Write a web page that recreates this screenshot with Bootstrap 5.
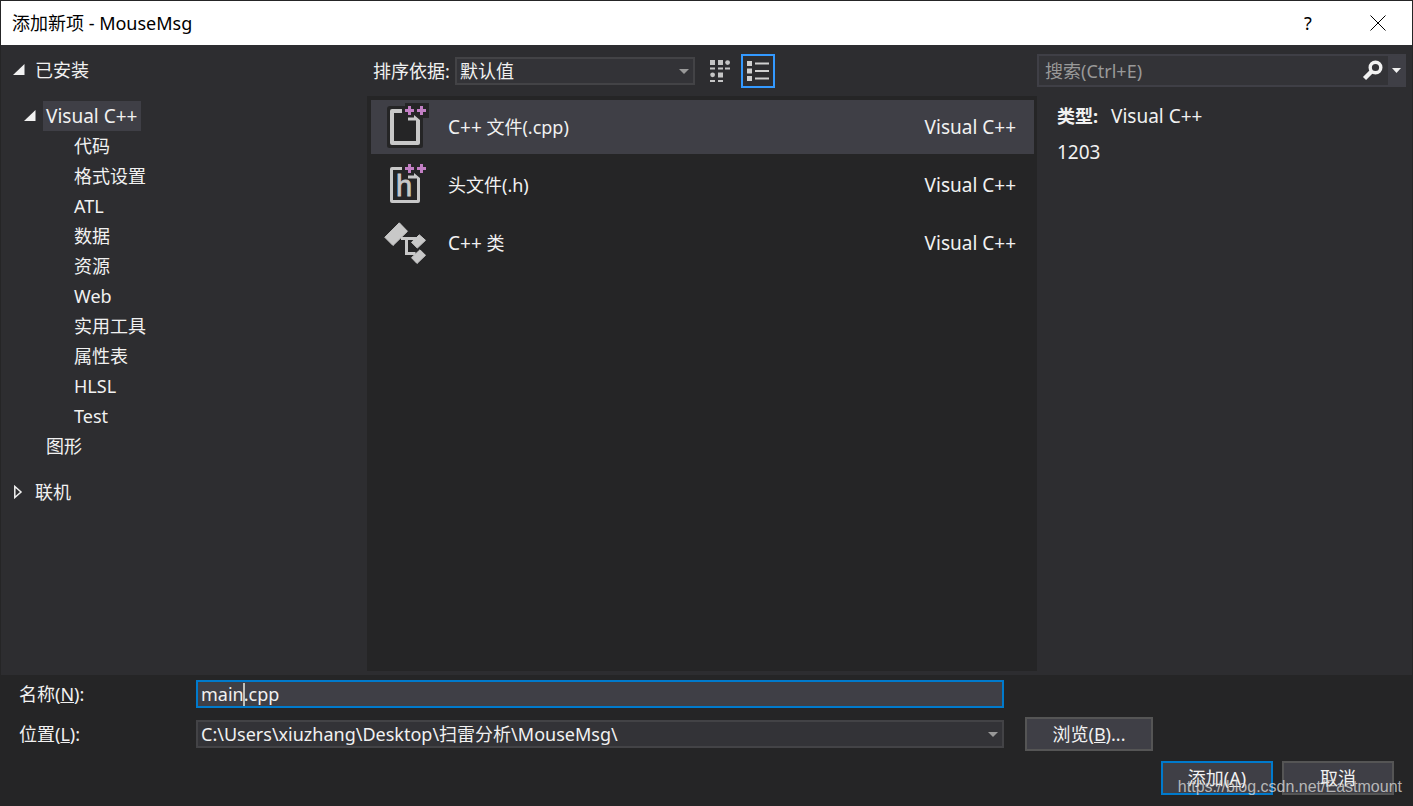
<!DOCTYPE html>
<html lang="zh-CN">
<head>
<meta charset="utf-8">
<meta name="viewport" content="width=device-width, initial-scale=1">
<title>添加新项 - MouseMsg</title>
<link href="https://cdn.jsdelivr.net/npm/bootstrap@5.3.0/dist/css/bootstrap.min.css" rel="stylesheet">
<style>
  body { font: 18px/30px "Noto Sans", "Noto Sans CJK SC", sans-serif; color: #f1f1f1; background: #252526; }
  button { font: inherit; color: inherit; background: none; border: 0; padding: 0; }
  svg { display: block; flex: none; }
  .lang { font-size: 19px; }
  .dialog { border: 1px solid #252526; }
  .titlebar { height: 44px; background: #fff; color: #000; padding: 0 10px 0 11px; line-height: 28px; }
  .title-btn { width: 48px; height: 44px; }
  .title-help { margin-right: 22px; }
  .workspace { display: grid; grid-template-columns: 366px minmax(0, 1fr) 375px; background: #2d2d30; }

  .tree { padding-top: 10px; }
  .tree ul { list-style: none; margin: 0; padding: 0; }
  .tree-node { display: flex; align-items: center; height: 30px; }
  .tree-node .twisty { width: 22px; flex: none; }
  .tree-root { padding-left: 12px; }
  .tree-branch { padding-left: 20px; }
  .tree-branch .twisty { padding-left: 3px; }
  .tree-label { padding: 0 3px; }
  .tree-root .tree-label { padding-left: 0; }
  .tree-leaf { padding-left: 70px; }
  .tree-node[aria-selected="true"] .tree-label { background: #3f3f46; padding-right: 4px; }

  .toolbar { height: 51px; padding-left: 6px; }
  .toolbar label { width: 82px; }
  .sort-box { width: 240px; }
  .view-btn { width: 34px; height: 34px; border: 2px solid transparent; display: flex; align-items: center; justify-content: center; }
  .view-btn[aria-pressed="true"] { border-color: #3399ff; }
  .templates { background: #252526; padding: 4px 3px 4px 4px; margin-bottom: 4px; }
  .template { height: 54px; padding: 0 18px 0 13px; text-align: left; }
  .template[aria-selected="true"] { background: #3f3f46; }

  .field { display: block; width: 100%; height: 28px; font: inherit; line-height: 24px; color: #f1f1f1; background: #333337; border: 2px solid #434346; border-radius: 0; padding: 0 3px; appearance: none; outline: 0; }
  .field-active { background: #3f3f46; border-color: #007acc; }
  .drop-arrow { position: absolute; right: 6px; top: 12px; pointer-events: none; }
  .text-caret { position: absolute; left: 47px; top: 3px; width: 2px; height: 23px; background: #c0c0b9; }

  .search { height: 33px; margin: 9px 6px 0 0; border: 2px solid #3f3f46; background: #333337; }
  .search input { font: inherit; color: #f1f1f1; background: none; border: 0; outline: 0; padding: 0 6px; line-height: 28px; }
  .search input::placeholder { color: #999; opacity: 1; }
  .search-menu { width: 16px; height: 29px; background: #3f3f46; }
  .details { padding: 14px 20px; }
  .details p { margin: 0 0 6px; }

  .footer { display: flex; flex-direction: column; gap: 9px; padding: 5px 18px 10px; line-height: 28px; }
  .form-line { display: grid; grid-template-columns: 177px minmax(0, 1fr) 390px; align-items: center; }
  .aside { padding-left: 21px; }
  .actions { gap: 9px; padding-top: 1px; }
  .dlg-btn { width: 112px; height: 34px; background: #3f3f46; border: 2px solid #555; }
  .dlg-btn-wide { width: 128px; display: block; }
  .dlg-btn-default { border-color: #007acc; }
  .watermark { position: absolute; right: 10px; bottom: 8px; font: 16px/20px "Liberation Sans", sans-serif; color: rgba(215, 215, 215, .8); pointer-events: none; }
</style>
</head>
<body>
<div class="dialog d-flex flex-column min-vh-100 position-relative">
  <header class="titlebar d-flex align-items-center">
    <span class="me-auto">添加新项 - MouseMsg</span>
    <button type="button" class="title-btn title-help" aria-label="帮助">?</button>
    <button type="button" class="title-btn d-flex align-items-center justify-content-center" aria-label="关闭">
      <svg width="16" height="16" viewBox="0 0 16 16" stroke="#000"><path d="M.5.5l15 15M15.5.5l-15 15"/></svg>
    </button>
  </header>

  <main class="workspace flex-grow-1">
    <nav class="tree">
      <ul class="d-flex flex-column gap-3">
        <li>
          <button type="button" class="tree-node tree-root" aria-expanded="true">
            <span class="twisty"><svg width="12" height="12"><path d="M11.500 0v11H0z" fill="#f1f1f1"/></svg></span><span class="tree-label">已安装</span>
          </button>
        </li>
        <li>
          <ul>
            <li>
              <button type="button" class="tree-node tree-branch" aria-expanded="true" aria-selected="true">
                <span class="twisty"><svg width="12" height="12"><path d="M11.500 0v11H0z" fill="#f1f1f1"/></svg></span><span class="tree-label lang">Visual C++</span>
              </button>
              <ul>
                <li><button type="button" class="tree-node tree-leaf"><span class="tree-label">代码</span></button></li>
                <li><button type="button" class="tree-node tree-leaf"><span class="tree-label">格式设置</span></button></li>
                <li><button type="button" class="tree-node tree-leaf"><span class="tree-label">ATL</span></button></li>
                <li><button type="button" class="tree-node tree-leaf"><span class="tree-label">数据</span></button></li>
                <li><button type="button" class="tree-node tree-leaf"><span class="tree-label">资源</span></button></li>
                <li><button type="button" class="tree-node tree-leaf"><span class="tree-label">Web</span></button></li>
                <li><button type="button" class="tree-node tree-leaf"><span class="tree-label">实用工具</span></button></li>
                <li><button type="button" class="tree-node tree-leaf"><span class="tree-label">属性表</span></button></li>
                <li><button type="button" class="tree-node tree-leaf"><span class="tree-label">HLSL</span></button></li>
                <li><button type="button" class="tree-node tree-leaf"><span class="tree-label">Test</span></button></li>
              </ul>
            </li>
            <li><button type="button" class="tree-node tree-branch"><span class="twisty"></span><span class="tree-label">图形</span></button></li>
          </ul>
        </li>
        <li>
          <button type="button" class="tree-node tree-root" aria-expanded="false">
            <span class="twisty"><svg width="10" height="14"><path d="M1.800 1.500v11L8 7z" fill="none" stroke="#f1f1f1" stroke-width="1.500"/></svg></span><span class="tree-label">联机</span>
          </button>
        </li>
      </ul>
    </nav>

    <section class="d-flex flex-column">
      <div class="toolbar d-flex align-items-center">
        <label for="sort">排序依据:</label>
        <div class="sort-box position-relative">
          <select id="sort" class="field"><option>默认值</option></select>
          <svg class="drop-arrow" width="10" height="5"><path d="M0 0h10L5 5z" fill="#999"/></svg>
        </div>
        <button type="button" class="view-btn ms-2" aria-label="中等图标" aria-pressed="false">
          <svg width="21" height="22" fill="#c5c5c5"><path d="M0 0h5v5H0zM8 0h5v5H8zM0 7.500h5v2H0zM8 7.500h5v2H8zM15 7.500h5v2h-5zM8 12.500h5v5H8zM0 20h5v2H0zM8 20h5v2H8z"/><circle cx="17.600" cy="2.600" r="2.400"/><circle cx="2.600" cy="14.800" r="2.400"/></svg>
        </button>
        <button type="button" class="view-btn ms-1" aria-label="小图标" aria-pressed="true">
          <svg width="22" height="20" fill="#d0d0d0"><path d="M0 0h5v5H0zM0 7.500h5v5H0zM0 15h5v5H0zM8 1.500h14v2H8zM8 9h14v2H8zM8 16.500h14v2H8z"/></svg>
        </button>
      </div>
      <div class="templates flex-grow-1 d-flex flex-column gap-1" role="listbox">
        <button type="button" class="template d-flex align-items-center" role="option" aria-selected="true">
          <svg class="me-3" width="48" height="50">
            <path d="M6 4h15v-3h24v15h-6v28q0 2-2 2H5.500q-2.500 0-2.500-2.500V7q0-3 3-3z" fill="#252526"/>
            <path d="M18 7v4h-8v28h22V18.500h-8v-3h6V13l6 5v23q0 2-2 2H8q-2 0-2-2V9q0-2 2-2z" fill="#c8c8c8"/>
            <path d="M24 4h3v3h3v3h-3v3h-3v-3h-3V7h3zM36 4h3v3h3v3h-3v3h-3v-3h-3V7h3z" fill="#c27fc4"/>
          </svg>
          <span class="me-auto"><span class="lang">C++</span> 文件(.cpp)</span><span class="lang">Visual C++</span>
        </button>
        <button type="button" class="template d-flex align-items-center" role="option" aria-selected="false">
          <svg class="me-3" width="48" height="50">
            <path d="M18 7v3H9v30h24V18.500h-9v-3h6V13l6 5v23q0 2-2 2H8q-2 0-2-2V9q0-2 2-2z" fill="#c8c8c8"/>
            <path d="M24 4h3v3h3v3h-3v3h-3v-3h-3V7h3zM36 4h3v3h3v3h-3v3h-3v-3h-3V7h3z" fill="#c27fc4"/>
            <text x="12" y="36" font-family="Liberation Sans, sans-serif" font-size="29" fill="#c8c8c8" stroke="#c8c8c8" stroke-width=".8">h</text>
          </svg>
          <span class="me-auto">头文件(.h)</span><span class="lang">Visual C++</span>
        </button>
        <button type="button" class="template d-flex align-items-center" role="option" aria-selected="false">
          <svg class="me-3" width="48" height="50" fill="#c8c8c8" stroke="#c8c8c8" stroke-linejoin="round">
            <path d="M.800 19.300L15.300 4.800l8.200 8.500L9 27.500zM35.300 16.800l6.200 5.500-8.200 7.800-5.800-5.800zM36 31.800l5.500 5.500-8.500 8.200-5.500-5.800z"/>
            <path d="M17 20.500h16M22.500 20v15.500h9" fill="none" stroke-width="3" stroke-linejoin="miter"/>
          </svg>
          <span class="me-auto"><span class="lang">C++</span> 类</span><span class="lang">Visual C++</span>
        </button>
      </div>
    </section>

    <aside>
      <div class="search d-flex align-items-center">
        <input class="flex-grow-1" type="search" placeholder="搜索(Ctrl+E)" aria-label="搜索">
        <button type="button" class="me-1" aria-label="开始搜索">
          <svg width="22" height="22" fill="none" stroke="#f1f1f1"><circle cx="13.500" cy="7.500" r="5.300" stroke-width="3.400"/><path d="M10 11L2.500 18.500" stroke-width="4.400"/></svg>
        </button>
        <button type="button" class="search-menu d-flex align-items-center justify-content-center" aria-label="搜索选项">
          <svg width="9" height="5"><path d="M0 0h9L4.500 5z" fill="#f1f1f1"/></svg>
        </button>
      </div>
      <div class="details">
        <p><strong class="me-2">类型:</strong><span class="lang"> Visual C++</span></p>
        <p class="lang">1203</p>
      </div>
    </aside>
  </main>

  <form class="footer">
    <div class="form-line">
      <label for="itemName">名称(<u>N</u>):</label>
      <div class="position-relative">
        <input id="itemName" class="field field-active" type="text" value="main.cpp">
        <span class="text-caret"></span>
      </div>
    </div>
    <div class="form-line">
      <label for="itemPath">位置(<u>L</u>):</label>
      <div class="position-relative">
        <select id="itemPath" class="field"><option>C:\Users\xiuzhang\Desktop\扫雷分析\MouseMsg\</option></select>
        <svg class="drop-arrow" width="10" height="5"><path d="M0 0h10L5 5z" fill="#999"/></svg>
      </div>
      <div class="aside"><button type="button" class="dlg-btn dlg-btn-wide">浏览(<u>B</u>)...</button></div>
    </div>
    <div class="actions d-flex justify-content-end">
      <button type="button" class="dlg-btn dlg-btn-default">添加(<u>A</u>)</button>
      <button type="button" class="dlg-btn">取消</button>
    </div>
  </form>
  <div class="watermark">https://blog.csdn.net/Eastmount</div>
</div>
<script src="https://cdn.jsdelivr.net/npm/bootstrap@5.3.0/dist/js/bootstrap.bundle.min.js"></script>
</body>
</html>
